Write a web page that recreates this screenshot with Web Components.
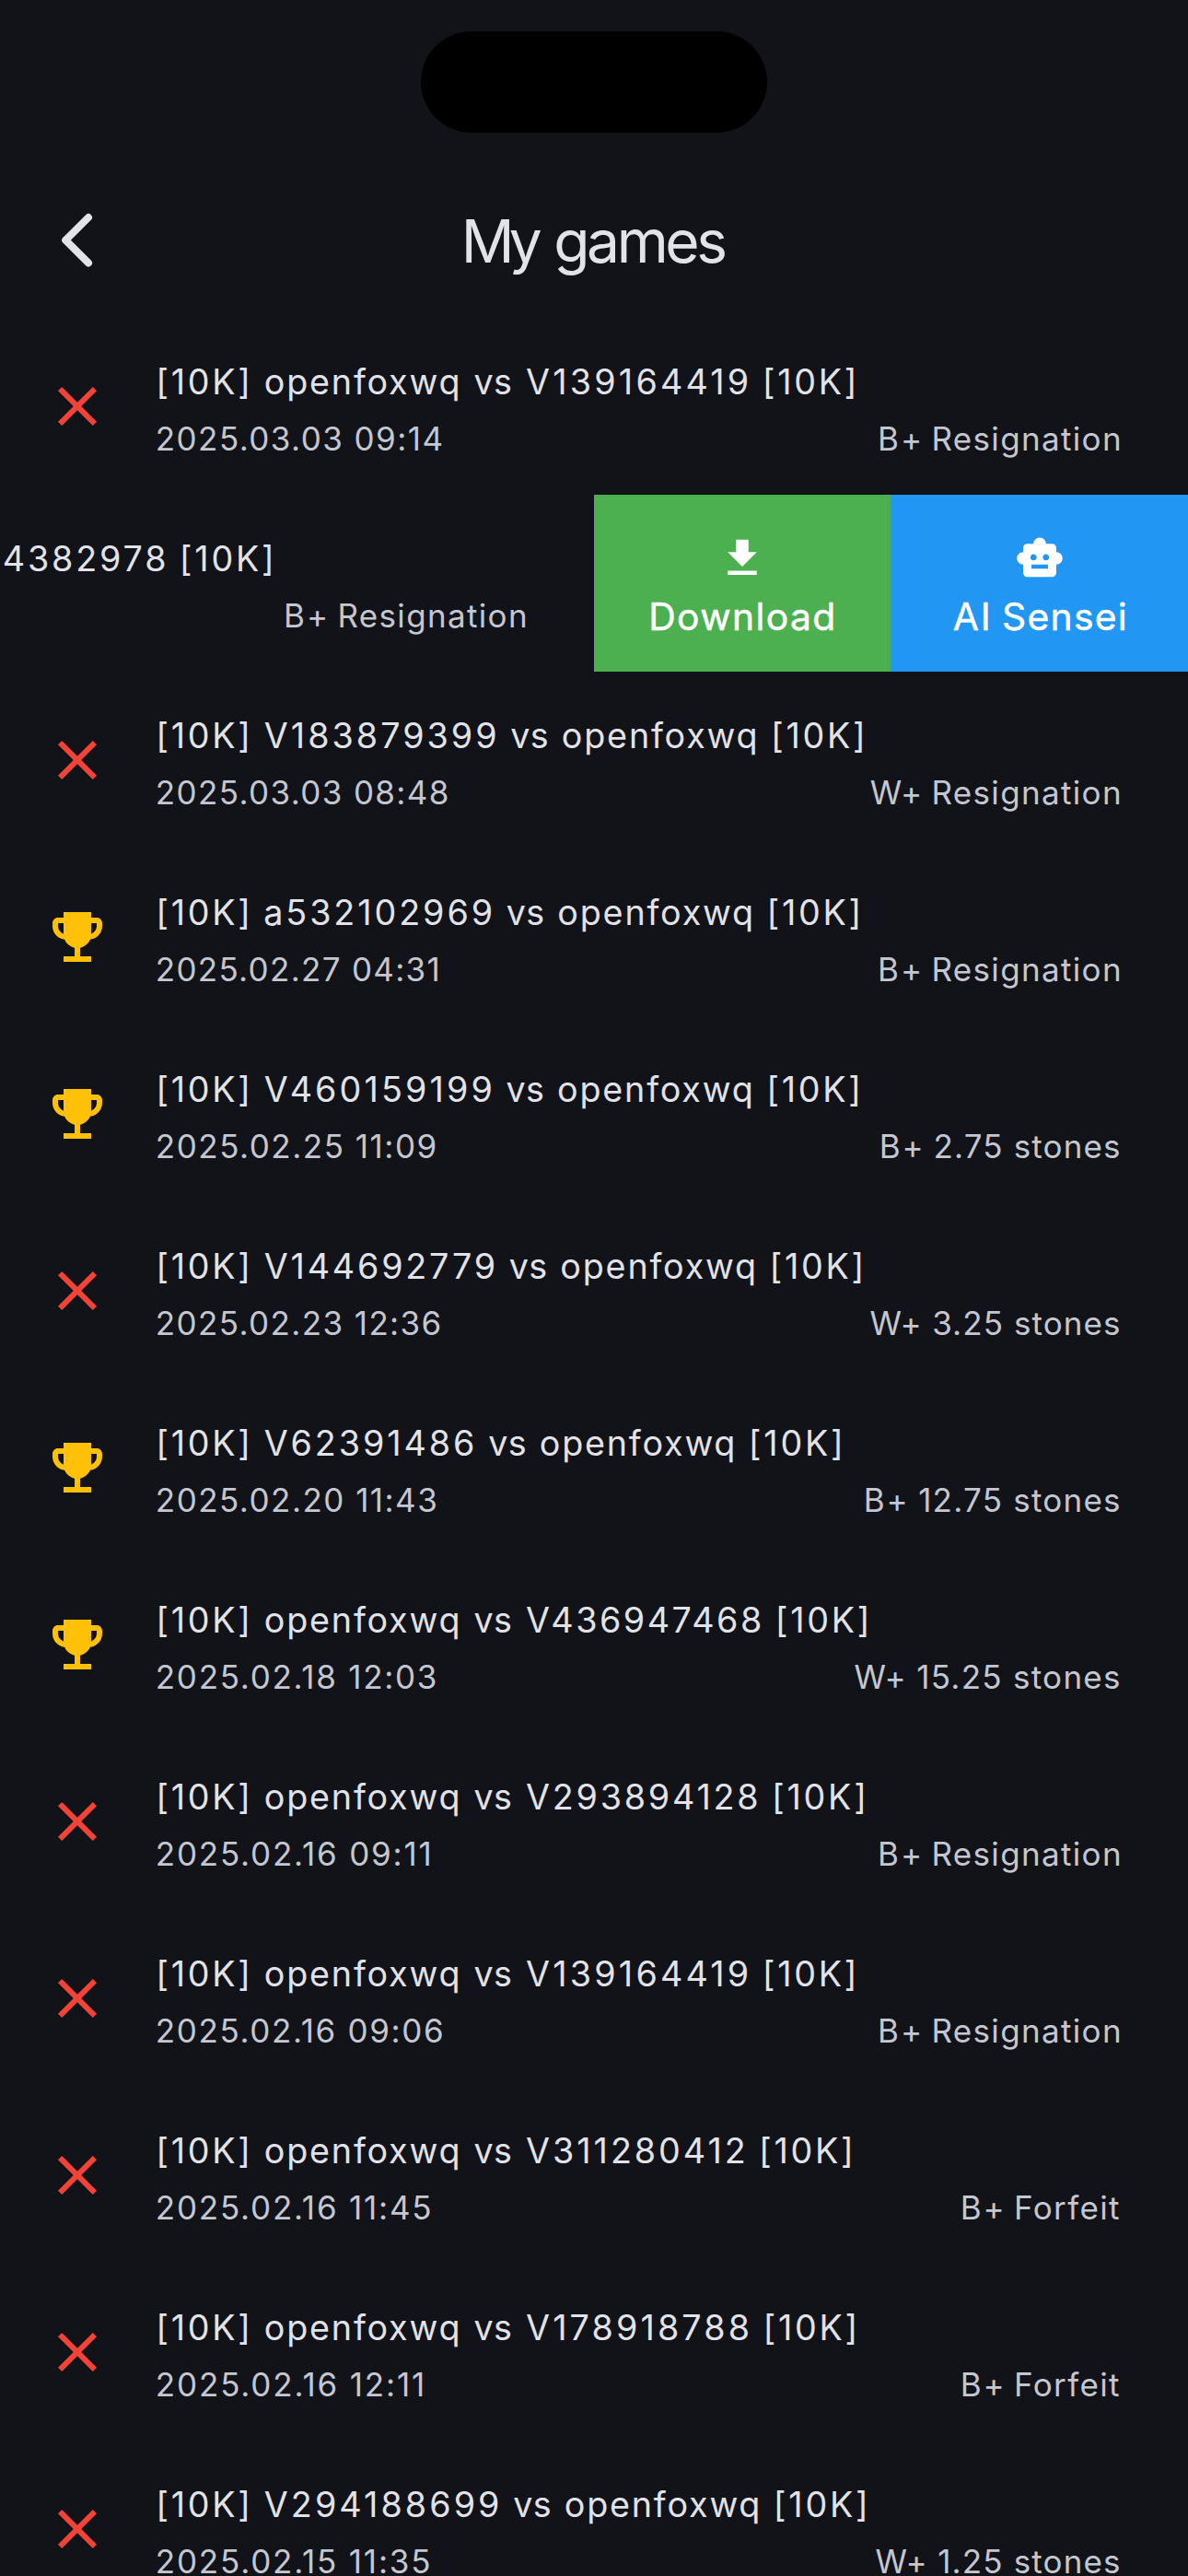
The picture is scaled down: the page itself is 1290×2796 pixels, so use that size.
<!DOCTYPE html>
<html lang="en"><head><meta charset="utf-8"><title>My games</title>
<style>
html,body{margin:0;height:100%;background:#111318;overflow:hidden}
body{font-family:Inter,"Noto Sans",sans-serif;color:#e2e2e9}
</style></head><body>
<games-screen></games-screen>
<script>
const define = (name, html, setup) => customElements.define(name, class extends HTMLElement {
  constructor() { super(); this.attachShadow({mode: 'open'}).innerHTML = html; }
  connectedCallback() { if (setup) setup(this, this.shadowRoot); }
});

const ICONS = {
  loss: ['#f44336', 'M19 6.41L17.59 5 12 10.59 6.41 5 5 6.41 10.59 12 5 17.59 6.41 19 12 13.41 17.59 19 19 17.59 13.41 12z'],
  win: ['#ffc107', 'M19,5h-2V3H7v2H5C3.9,5,3,5.9,3,7v1c0,2.55,1.92,4.63,4.39,4.94c0.63,1.5,1.98,2.63,3.61,2.96V19H7v2h10v-2h-4v-3.1c1.63-0.33,2.98-1.46,3.61-2.96C19.08,12.63,21,10.55,21,8V7C21,5.9,20.1,5,19,5z M5,8V7h2v3.82C5.84,10.4,5,9.3,5,8z M19,8c0,1.3-0.84,2.4-2,2.82V7h2V8z'],
  download: ['#fff', 'M5 20h14v-2H5v2zM19 9h-4V3H9v6H5l7 7 7-7z'],
  robot: ['#fff', 'M20 9V7c0-1.1-.9-2-2-2h-3c0-1.66-1.34-3-3-3S9 3.34 9 5H6c-1.1 0-2 .9-2 2v2c-1.66 0-3 1.34-3 3s1.34 3 3 3v4c0 1.1.9 2 2 2h12c1.1 0 2-.9 2-2v-4c1.66 0 3-1.34 3-3s-1.34-3-3-3zM7.5 11.5c0-.83.67-1.5 1.5-1.5s1.5.67 1.5 1.5S9.83 13 9 13s-1.5-.67-1.5-1.5zM16 17H8v-2h8v2zm-1-4c-.83 0-1.5-.67-1.5-1.5S14.17 10 15 10s1.5.67 1.5 1.5S15.83 13 15 13z']
};

const pen = document.createElement('canvas').getContext('2d');

// Sets a line from alternating [text, ink width] words and numeric ink gaps,
// tracking each word to its width and trimming the outer side bearings.
function track(node, size, parts) {
  pen.font = `400 ${size * 8}px Inter`;
  const space = pen.measureText(' ').width / 8;
  const words = parts.filter(Array.isArray).map(([text, width]) => {
    const m = pen.measureText(text);
    const l = -m.actualBoundingBoxLeft / 8, r = m.actualBoundingBoxRight / 8;
    const ls = (width - (r - l)) / (text.length - 1);
    return {text, ls, left: l, right: m.width / 8 - r + ls};
  });
  const gaps = parts.filter(p => !Array.isArray(p));
  node.textContent = '';
  words.forEach((w, i) => {
    if (i) {
      const s = document.createElement('span');
      s.textContent = ' ';
      s.style.letterSpacing = (gaps[i - 1] - words[i - 1].right - w.left - space).toFixed(2) + 'px';
      node.append(s);
    }
    const s = document.createElement('span');
    s.textContent = w.text;
    s.style.letterSpacing = w.ls.toFixed(3) + 'px';
    node.append(s);
  });
  node.style.marginLeft = (-words[0].left).toFixed(2) + 'px';
  node.style.marginRight = (-words[words.length - 1].right).toFixed(2) + 'px';
}

define('app-icon', `<style>:host{display:block;width:72px;height:72px;flex:none}svg{display:block;width:100%;height:100%}</style>
<svg viewBox="0 0 24 24"><path/></svg>`, (el, root) => {
  const [fill, d] = ICONS[el.getAttribute('name')];
  const path = root.querySelector('path');
  path.setAttribute('fill', fill);
  path.setAttribute('d', d);
});

define('status-area', `<style>
:host{display:flex;justify-content:center;flex:none;height:177px;padding-top:34px;box-sizing:border-box}
div{width:376px;height:110px;border-radius:55px;background:#000}
</style><div></div>`);

define('app-header', `<style>
:host{display:grid;grid-template-columns:171px 1fr 168px;align-items:center;flex:none;height:168px}
svg{display:block;margin-left:48px;width:72px;height:72px}
h1{margin:1px 0 0;justify-self:center;font-size:64px;line-height:84px;font-weight:400;white-space:pre}
</style>
<svg viewBox="0 0 72 72" fill="none" stroke="#e2e2e9" stroke-width="8" stroke-linecap="round" stroke-linejoin="round"><path d="M48 11 23.2 35.7 48 60.4"/></svg>
<h1></h1>`, (el, root) => track(root.querySelector('h1'), 64, [['My', 82], 16.5, ['games', 183]]));

define('game-row', `<style>
:host{display:flex;align-items:center;height:192px;padding:0 75px 0 48px;box-sizing:border-box}
.text{flex:1;min-width:0;margin-left:51px;padding-top:8.6px;white-space:pre}
.title{display:flex;padding-left:2.4px;font-size:37.7px;line-height:62px}
.meta{display:flex;justify-content:space-between;color:#c4c6d0;font-size:35px;line-height:62px}
:host([trailing]) .text{margin-left:0}
:host([trailing]) .title{padding-left:0}
:host([trailing]){padding-left:4.5px}
</style>
<div class="text"><div class="title"><div class="players"></div></div><div class="meta"><div class="date"></div><div class="result"></div></div></div>`, (el, root) => {
  const {icon, title, date, result} = el.game;
  if (icon) {
    const i = document.createElement('app-icon');
    i.setAttribute('name', icon);
    root.querySelector('.text').before(i);
  }
  track(root.querySelector('.players'), 37.7, title);
  if (date) track(root.querySelector('.date'), 35, [date]);
  track(root.querySelector('.result'), 35, result);
});

define('swipe-row', `<style>
:host{display:grid;grid-template-columns:645px 322px 323px;height:192px}
</style><slot></slot>`);

define('swipe-action', `<style>
:host{display:flex;flex-direction:column;align-items:center;background:var(--fill);color:#fff}
div{font-size:40.8px;line-height:50px;margin-top:11px;-webkit-text-stroke:.5px #fff;white-space:pre}
app-icon{width:54px;height:54px;margin-top:42px}
</style><div></div>`, (el, root) => {
  const i = document.createElement('app-icon');
  i.setAttribute('name', el.getAttribute('icon'));
  const label = root.querySelector('div');
  label.before(i);
  track(label, 40.8, JSON.parse(el.getAttribute('label')));
});

const GAMES = [
  ['loss', 'openfoxwq vs V139164419', 753.5, '2025.03.03 09:14', 308.2, 'B+ Resignation', 259.2],
  null,
  ['loss', 'V183879399 vs openfoxwq', 762.8, '2025.03.03 08:48', 314.5, 'W+ Resignation', 269.6],
  ['win', 'a532102969 vs openfoxwq', 758.3, '2025.02.27 04:31', 304, 'B+ Resignation', 259.2],
  ['win', 'V460159199 vs openfoxwq', 758, '2025.02.25 11:09', 301.2, 'B+ 2.75 stones', 257.6],
  ['loss', 'V144692779 vs openfoxwq', 761.3, '2025.02.23 12:36', 306.3, 'W+ 3.25 stones', 270],
  ['win', 'V62391486 vs openfoxwq', 738.7, '2025.02.20 11:43', 301.9, 'B+ 12.75 stones', 274.6],
  ['win', 'openfoxwq vs V436947468', 767.6, '2025.02.18 12:03', 301.5, 'W+ 15.25 stones', 287],
  ['loss', 'openfoxwq vs V293894128', 763.9, '2025.02.16 09:11', 294.9, 'B+ Resignation', 259.2],
  ['loss', 'openfoxwq vs V139164419', 753.5, '2025.02.16 09:06', 308.6, 'B+ Resignation', 259.2],
  ['loss', 'openfoxwq vs V311280412', 749.8, '2025.02.16 11:45', 296, 'B+ Forfeit', 169.6],
  ['loss', 'openfoxwq vs V178918788', 754.3, '2025.02.16 12:11', 287.5, 'B+ Forfeit', 169.6],
  ['loss', 'V294188699 vs openfoxwq', 765.7, '2025.02.15 11:35', 294.9, 'W+ 1.25 stones', 264]
];

const RANK = ['[10K]', 95], ME = ['openfoxwq', 208.5], VS = ['vs', 39.2];
function players(text, width) {
  const [a, , b] = text.split(' ');
  return a === 'openfoxwq'
    ? [RANK, 20.2, ME, 18, VS, 17.4, [b, width - 437.7 - 76.3], 20.7, RANK]
    : [RANK, 19, [a, width - 437.7 - 75], 17.4, VS, 17.6, ME, 21, RANK];
}
function outcome(text, width) {
  const side = text.slice(0, 2), w = side === 'W+' ? 52.8 : 42.4;
  return [[side, w], 16, [text.slice(3), width - w - 16]];
}

define('games-screen', `<style>
:host{display:flex;flex-direction:column;width:1290px;height:2796px;overflow:hidden;background:#111318}
main{display:flex;flex-direction:column;flex:none}
</style>
<status-area></status-area>
<app-header></app-header>
<main></main>`, (el, root) => {
  const main = root.querySelector('main');
  for (const g of GAMES) {
    const row = document.createElement('game-row');
    if (g) {
      row.game = {icon: g[0], title: players(g[1], g[2]), date: [g[3], g[4]], result: outcome(g[5], g[6])};
      main.append(row);
    } else {
      row.game = {title: [['4382978', 174], 20.5, RANK], result: outcome('B+ Resignation', 259.2)};
      row.setAttribute('trailing', '');
      const swipe = document.createElement('swipe-row');
      swipe.innerHTML = `<swipe-action icon="download" label='[["Download",197]]' style="--fill:#4caf50"></swipe-action>
        <swipe-action icon="robot" label='[["AI",37],17.5,["Sensei",131.5]]' style="--fill:#2196f3"></swipe-action>`;
      swipe.prepend(row);
      main.append(swipe);
    }
  }
});
</script></body></html>
